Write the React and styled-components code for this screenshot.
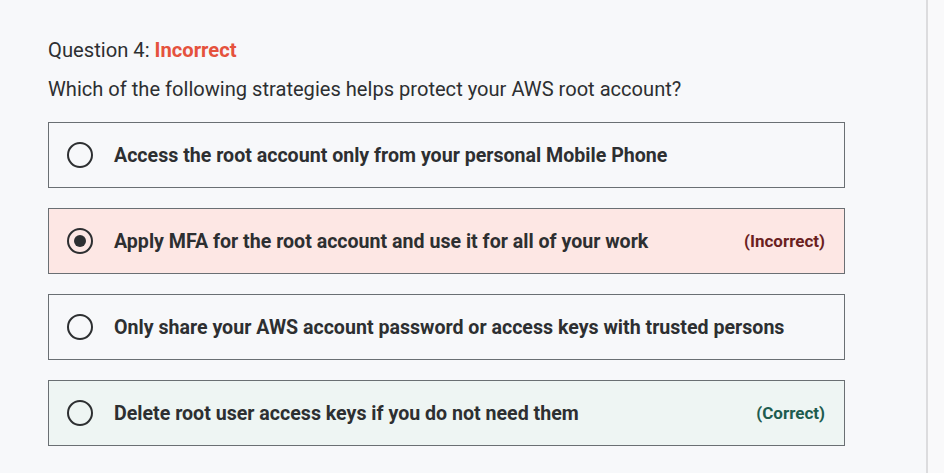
import React from 'react';
import styled, { createGlobalStyle } from 'styled-components';

const GlobalStyle = createGlobalStyle`
  html, body {
    margin: 0;
    padding: 0;
    background: #f7f8fa;
    font-family: Roboto, "Liberation Sans", sans-serif;
  }
`;

const Page = styled.div`
  display: flex;
  height: 473px;
  overflow: hidden;
`;

const Main = styled.div`
  flex: 0 0 926px;
  padding: 38px 0 0 48px;
  box-sizing: border-box;
`;

const Edge = styled.div`
  flex: 1;
  border-left: 2px solid #dcdcde;
  background: #f9f9fa;
`;

const Title = styled.div`
  font-size: 20.2px;
  color: #2d2f31;
  line-height: 24px;
`;

const Verdict = styled.span`
  color: #e5523d;
  font-weight: 700;
`;

const Prompt = styled.div`
  margin-top: 14px;
  font-size: 20.1px;
  color: #2d2f31;
  line-height: 26px;
`;

const Options = styled.div`
  margin-top: 20px;
  width: 797px;
  display: flex;
  flex-direction: column;
  gap: 20px;
`;

const tones = {
  none: { bg: 'transparent', fg: '#2d2f31' },
  wrong: { bg: '#fde7e4', fg: '#6b1f1f' },
  right: { bg: '#eef5f3', fg: '#1d5c4f' },
};

const Option = styled.div`
  height: 66px;
  box-sizing: border-box;
  border: 1px solid #6a6f73;
  background: ${(p) => tones[p.$tone].bg};
  display: flex;
  align-items: center;
  padding: 0 19px 0 18px;
`;

const Radio = styled.span`
  width: 26px;
  height: 26px;
  border: 2.5px solid #2d2f31;
  border-radius: 50%;
  box-sizing: border-box;
  flex: none;
  display: flex;
  align-items: center;
  justify-content: center;
  &::after {
    content: '';
    display: ${(p) => (p.$checked ? 'block' : 'none')};
    width: 12px;
    height: 12px;
    border-radius: 50%;
    background: #2d2f31;
  }
`;

const Label = styled.span`
  margin-left: 21px;
  flex: 1;
  font-size: 19.6px;
  font-weight: 700;
  color: #2d2f31;
`;

const Result = styled.span`
  font-size: 17px;
  font-weight: 700;
  color: ${(p) => tones[p.$tone].fg};
`;

const options = [
  { text: 'Access the root account only from your personal Mobile Phone', tone: 'none' },
  { text: 'Apply MFA for the root account and use it for all of your work', tone: 'wrong', checked: true, result: '(Incorrect)' },
  { text: 'Only share your AWS account password or access keys with trusted persons', tone: 'none' },
  { text: 'Delete root user access keys if you do not need them', tone: 'right', result: '(Correct)' },
];

export default function App() {
  return (
    <>
      <GlobalStyle />
      <Page>
        <Main>
          <Title>
            Question 4: <Verdict>Incorrect</Verdict>
          </Title>
          <Prompt>Which of the following strategies helps protect your AWS root account?</Prompt>
          <Options>
            {options.map((o) => (
              <Option key={o.text} $tone={o.tone}>
                <Radio $checked={o.checked} />
                <Label>{o.text}</Label>
                {o.result && <Result $tone={o.tone}>{o.result}</Result>}
              </Option>
            ))}
          </Options>
        </Main>
        <Edge />
      </Page>
    </>
  );
}
